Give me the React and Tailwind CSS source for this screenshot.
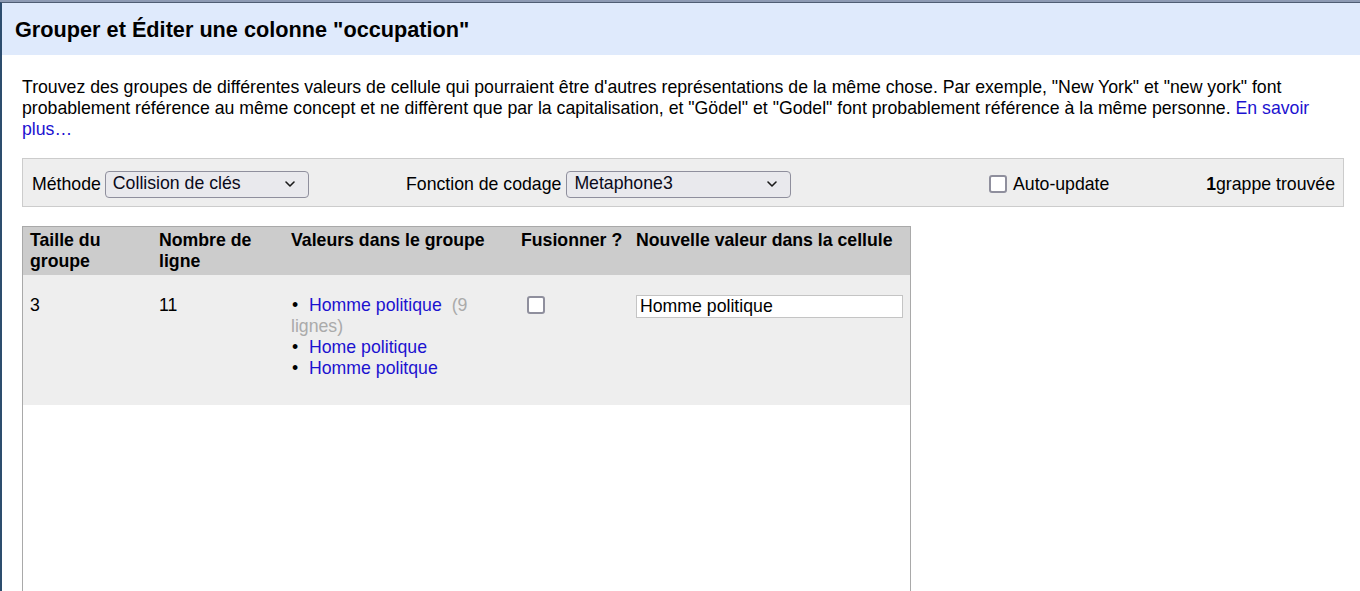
import React from "react";

function Chevron() {
  return (
    <svg width="12" height="8" viewBox="0 0 12 8" className="shrink-0">
      <path d="M2 2 L6 6 L10 2" fill="none" stroke="#1a1a1a" strokeWidth="1.6" strokeLinecap="round" strokeLinejoin="round" />
    </svg>
  );
}

function FakeSelect({ value, width }) {
  return (
    <div
      className={`flex items-center justify-between h-[27px] border border-[#8f8f9d] rounded-[4px] bg-[#e9e9ed] pl-[7px] pr-[12px] ${width}`}
    >
      <span className="text-[17.7px] leading-none text-[#0a0a1a]">{value}</span>
      <Chevron />
    </div>
  );
}

function Checkbox() {
  return <div className="w-[18px] h-[18px] border-2 border-[#8f8f9d] rounded-[3px] bg-white shrink-0" />;
}

function Bullet() {
  return <span className="inline-block w-[18px] pl-[1px]">•</span>;
}

export default function App() {
  return (
    <div className="w-[1360px] h-[591px] overflow-hidden bg-white font-['Liberation_Sans',Arial,sans-serif] text-black">
      <div className="h-[2px] bg-[#8d9ab3]" />
      <div className="h-[589px] border-l-2 border-t border-l-[#2d4d6e] border-t-[#4f5d73] flex flex-col">
        <div className="h-[52px] bg-[#dfeafc] flex items-center pl-[13px] pt-[1px]">
          <h1 className="text-[21.7px] font-bold leading-none">Grouper et Éditer une colonne "occupation"</h1>
        </div>
        <div className="px-[20px] pt-[22px] flex flex-col flex-1 min-h-0">
          <p className="text-[17.7px] leading-[21px] pr-[16px]">
            Trouvez des groupes de différentes valeurs de cellule qui pourraient être d'autres représentations de la même chose. Par exemple, "New York" et "new york" font probablement référence au même concept et ne diffèrent que par la capitalisation, et "Gödel" et "Godel" font probablement référence à la même personne.{" "}
            <a className="text-[#1c12d0]">En savoir plus…</a>
          </p>

          <div className="mt-[18px] w-[1322px] h-[49px] bg-[#eeeeee] border border-[#cccccc] flex items-center pl-[9px] pr-[8px] pt-[3px] text-[17.7px]">
            <div className="w-[374px] flex items-center">
              <span>Méthode</span>
              <div className="ml-[4px]">
                <FakeSelect value="Collision de clés" width="w-[204px]" />
              </div>
            </div>
            <div className="w-[583px] flex items-center">
              <span>Fonction de codage</span>
              <div className="ml-[5px]">
                <FakeSelect value="Metaphone3" width="w-[225px]" />
              </div>
            </div>
            <div className="flex items-center gap-[6px]">
              <Checkbox />
              <span>Auto-update</span>
            </div>
            <span className="ml-auto">
              <b>1</b>grappe trouvée
            </span>
          </div>

          <div className="mt-[19px] w-[889px] flex-1 border-x border-t border-[#a9a9a9] flex flex-col text-[17.7px] leading-[21px]">
            <div className="h-[48px] bg-[#cccccc] flex font-bold pt-[3px]">
              <div className="w-[129px] pl-[7px]">Taille du groupe</div>
              <div className="w-[132px] pl-[7px]">Nombre de ligne</div>
              <div className="w-[230px] pl-[7px]">Valeurs dans le groupe</div>
              <div className="w-[115px] pl-[7px]">Fusionner ?</div>
              <div className="flex-1 pl-[7px]">Nouvelle valeur dans la cellule</div>
            </div>
            <div className="h-[130px] bg-[#eeeeee] flex pt-[20px]">
              <div className="w-[129px] pl-[7px]">3</div>
              <div className="w-[132px] pl-[7px]">11</div>
              <div className="w-[230px] pl-[7px] pr-[8px]">
                <ul className="list-none">
                  <li>
                    <Bullet />
                    <a className="text-[#1c12d0]">Homme politique</a>
                    <span className="text-[#aaaaaa] ml-[10px]">(9 lignes)</span>
                  </li>
                  <li>
                    <Bullet />
                    <a className="text-[#1c12d0]">Home politique</a>
                  </li>
                  <li>
                    <Bullet />
                    <a className="text-[#1c12d0]">Homme politque</a>
                  </li>
                </ul>
              </div>
              <div className="w-[115px] pl-[13px] pt-[1px]">
                <Checkbox />
              </div>
              <div className="flex-1 pl-[7px] pr-[7px]">
                <div className="h-[23px] border border-[#c4c4c4] bg-white flex items-center pl-[3px] text-[17.7px] leading-none">
                  Homme politique
                </div>
              </div>
            </div>
            <div className="flex-1 bg-white" />
          </div>
        </div>
      </div>
    </div>
  );
}
